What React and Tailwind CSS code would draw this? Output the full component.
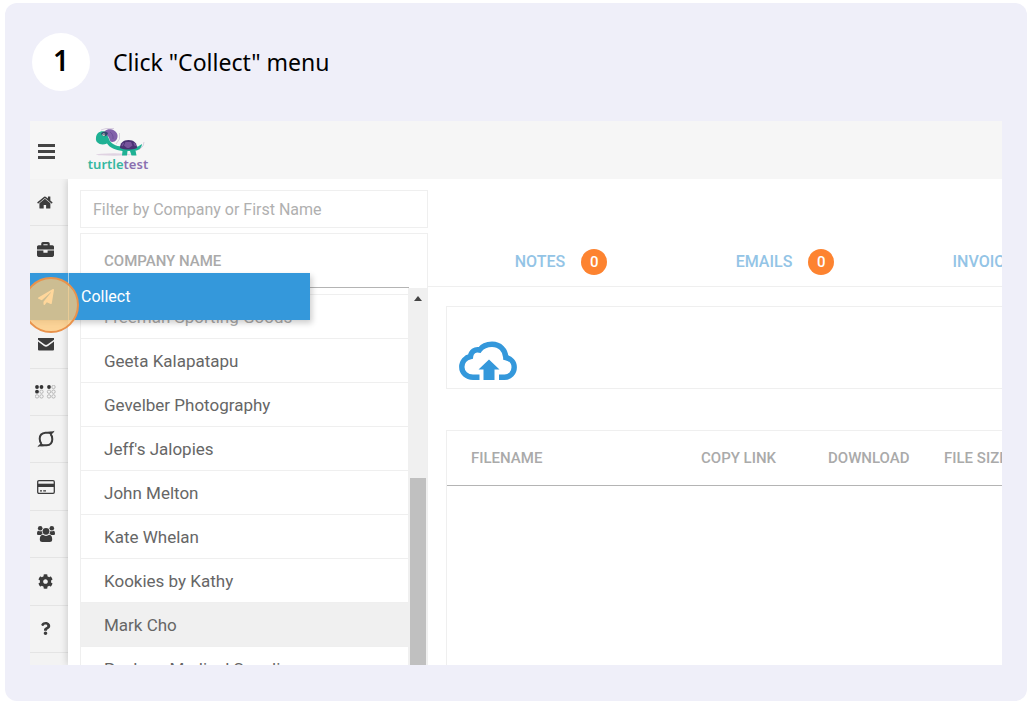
import React from "react";
import { FaBriefcase, FaPaperPlane, FaCog, FaQuestion } from "react-icons/fa";

function HomeIcon() {
  return (
    <svg viewBox="0 0 1792 1792" className="size-[17px]" fill="currentColor" aria-hidden="true">
      <path d="M1408 992v480q0 26-19 45t-45 19h-384v-384h-256v384h-384q-26 0-45-19t-19-45v-480q0-1 .5-3t.5-3l575-474 575 474q1 2 1 6zm223-69l-62 74q-8 9-21 11h-3q-13 0-21-7l-692-577-692 577q-12 8-24 7-13-2-21-11l-62-74q-8-10-7-23.5t11-21.5l719-599q32-26 76-26t76 26l244 204v-195q0-14 9-23t23-9h192q14 0 23 9t9 23v408l219 182q10 8 11 21.5t-7 23.5z" />
    </svg>
  );
}

function MailIcon() {
  return (
    <svg viewBox="0 0 18 14" className="h-[14px] w-[18px]" fill="currentColor" aria-hidden="true">
      <path d="M1 1H17V2.800L10.300 7.600C9.500 8.200 8.500 8.200 7.700 7.600L1 2.800Z" />
      <path d="M1 4.600L7 9C8.200 9.900 9.800 9.900 11 9L17 4.600V12.500Q17 13.500 16 13.500H2Q1 13.500 1 12.500Z" />
    </svg>
  );
}

function DotsIcon() {
  const cells = [];
  [2, 6.5, 14, 18.5].forEach((x, c) =>
    [2, 6.7, 11.4].forEach((y, r) => cells.push({ x, y, on: (r === 0 && c < 3) || (r === 1 && c === 0) }))
  );
  return (
    <svg viewBox="0 0 21 14" className="h-[14px] w-[21px]" aria-hidden="true">
      {cells.map(({ x, y, on }) => (
        <circle key={x + "-" + y} cx={x} cy={y} r={on ? 1.9 : 1.7} fill={on ? "#333" : "#f3f3f3"} stroke={on ? "none" : "#aaa"} strokeWidth="0.8" />
      ))}
    </svg>
  );
}

function LoopIcon() {
  return (
    <svg viewBox="0 0 18 18" className="size-[18px]" fill="none" stroke="currentColor" strokeWidth="2" aria-hidden="true">
      <path d="M14.500 2.700C12 2.700 11 2.700 8.500 2.700C4.500 3 2.700 5.500 2.700 8.800C2.700 11.500 3.500 13 4.500 14" />
      <path d="M3.500 15.300C6 15.300 7 15.300 9.500 15.300C13.500 15 15.300 12.500 15.300 9.200C15.300 6.500 14.500 5 13.500 4" />
      <path d="M17.500 0.800C16 1.800 13 1.600 10.500 1.900L13.500 4.800C15.500 4 17 2.500 17.500 0.800ZM0.500 17.200C2 16.200 5 16.400 7.500 16.100L4.500 13.200C2.500 14 1 15.500 0.500 17.200Z" fill="currentColor" stroke="none" />
    </svg>
  );
}

function CardIcon() {
  return (
    <svg viewBox="0 0 20 16" className="h-4 w-5" aria-hidden="true">
      <rect x="1.700" y="1.700" width="16.600" height="12.600" rx="1.200" fill="none" stroke="currentColor" strokeWidth="1.300" />
      <path d="M1.700 4.700H18.300V8H1.700Z" fill="currentColor" />
      <path d="M4 11.800H6M7.200 11.800H10" stroke="currentColor" strokeWidth="1.200" />
    </svg>
  );
}

function UsersIcon() {
  return (
    <svg viewBox="0 0 20 18" className="h-[18px] w-5" fill="currentColor" aria-hidden="true">
      <circle cx="4.200" cy="3.200" r="2.300" />
      <circle cx="15.800" cy="3.200" r="2.300" />
      <circle cx="10" cy="6.300" r="3.400" />
      <path d="M2.500 5.700C1.300 5.700 1 7.300 1 8.700C1 9.600 1.600 10 2.500 10H4.800C5.500 9.300 6.200 9 6.600 8.800C6 8 5.700 7.200 5.800 6.100C4.500 6.500 3.500 6.300 2.500 5.700Z" />
      <path d="M17.500 5.700C18.700 5.700 19 7.300 19 8.700C19 9.600 18.400 10 17.500 10H15.200C14.500 9.300 13.800 9 13.400 8.800C14 8 14.300 7.200 14.200 6.100C15.500 6.500 16.500 6.300 17.500 5.700Z" />
      <path d="M6.700 9.800C8.800 11.300 11.200 11.300 13.300 9.800C15.500 9.800 16.200 12 16.200 14.500C16.200 16.200 15.200 17 13.800 17H6.200C4.800 17 3.800 16.200 3.800 14.500C3.800 12 4.500 9.800 6.700 9.800Z" />
    </svg>
  );
}

function CloudUploadIcon() {
  return (
    <svg viewBox="0 0 58 40" className="h-10 w-[58px]" aria-hidden="true">
      <path
        d="M20.500 36.200H14C7.500 36.200 2.800 31.700 2.800 26C2.800 20.500 6.700 16.500 11.500 15.500C12 10.500 16 8 20.500 9C23.500 5 28 3.300 33 3.300C41 3.300 46.500 9 46.800 16.500C51.500 17.500 55.200 21 55.200 26.200C55.200 32 51 36.200 45.500 36.200H40"
        fill="none"
        stroke="#3498db"
        strokeWidth="5.400"
      />
      <path d="M30 18.500L40.500 28.500H35.500V39H24.500V28.500H19.500Z" fill="#3498db" />
    </svg>
  );
}

function Logo() {
  return (
    <a href="#home" aria-label="turtletest" className="flex w-16 flex-col items-center pb-[2px]">
      <svg viewBox="0 0 60 30" className="h-[30px] w-[60px]" aria-hidden="true">
        <ellipse cx="26" cy="26.500" rx="18" ry="1.200" fill="#e0d3e2" />
        <path d="M8 10C8 5 13 2 18 4L21 11C22 15 28 18.500 34 18.500H50L54 16C53.500 20 51 22.500 47.500 22.500L48.500 27.500H43.500L42 23H39.500L39 27.500H34L34.500 23C27 22 22 20 19 15.500C13 18 7 15 8 10Z" fill="#1fb194" />
        <path d="M17 3C20 0 28 1 29.500 7C30 11 27.500 14 24.500 14C20.500 14 22.500 9 19 7.500Z" fill="#8261ab" />
        <path d="M22 4C24 5 25.500 8 25 11" fill="none" stroke="#6a4a95" strokeWidth="0.800" />
        <path d="M13 6C14 3 18 2.500 20 5C19 8.500 16 9.500 13 6Z" fill="#31486d" />
        <circle cx="15.800" cy="6.800" r="1.300" fill="#fff" />
        <circle cx="16" cy="6.800" r="0.700" fill="#222" />
        <path d="M32 20C32 15 35 12 40.500 12C46 12 49 15 49 20C44 22 37 22 32 20Z" fill="#4b3274" />
        <path d="M37.500 14H43L44.500 17.500L41 20H39L36 17.500Z" fill="#77539b" />
        <path d="M34 18L35.500 15M46 15L47.500 18" stroke="#77539b" strokeWidth="1.500" />
        <path d="M13 2L18 0.500H26M31.500 5V11L28 16M51 22L55 18L56 14" fill="none" stroke="#cbbfd5" strokeWidth="0.700" />
      </svg>
      <span className="font-['Noto_Sans'] text-[13px] font-semibold leading-3 text-[#35b8a0]">
        turtle<span className="text-[#8b70b0]">test</span>
      </span>
    </a>
  );
}

const navItems = [
  { label: "Home", icon: <HomeIcon /> },
  { label: "Clients", icon: <FaBriefcase className="size-[17px]" /> },
  { label: "Collect", icon: <FaPaperPlane className="size-4" /> },
  { label: "Mail", icon: <MailIcon /> },
  { label: "Boards", icon: <DotsIcon /> },
  { label: "Sync", icon: <LoopIcon /> },
  { label: "Payments", icon: <CardIcon /> },
  { label: "Team", icon: <UsersIcon /> },
  { label: "Settings", icon: <FaCog className="size-[15px]" /> },
  { label: "Help", icon: <FaQuestion className="size-[13px]" /> },
];

const companies = [
  "Freeman Sporting Goods",
  "Geeta Kalapatapu",
  "Gevelber Photography",
  "Jeff's Jalopies",
  "John Melton",
  "Kate Whelan",
  "Kookies by Kathy",
  "Mark Cho",
  "Paulson Medical Supplies",
];

function Sidebar() {
  return (
    <nav className="w-[38px] shrink-0 bg-[#f3f3f3] text-[#3c3c3c]" aria-label="Main">
      <ul className="grid h-[474px] grid-rows-10">
        {navItems.map((item) => (
          <li key={item.label} className="border-b border-[#e4e4e4]">
            <a href={"#" + item.label.toLowerCase()} aria-label={item.label} className="flex h-full items-center justify-center pr-[7px]">
              {item.icon}
            </a>
          </li>
        ))}
      </ul>
    </nav>
  );
}

function CompanyPanel() {
  return (
    <section className="flex w-[348px] shrink-0 flex-col pt-[11px]">
      <input
        type="text"
        aria-label="Filter by Company or First Name"
        placeholder="Filter by Company or First Name"
        className="h-[38px] shrink-0 border border-[#efefef] bg-white px-3 text-base outline-none placeholder:text-[#b0b0b0]"
      />
      <div className="mt-[5px] flex min-h-0 flex-1 flex-col border border-b-0 border-[#efefef]">
        <div className="mr-[18px] h-[54px] shrink-0 border-b border-[#b4b4b4] pl-[23px] text-[15px] font-medium leading-[54px] text-[#aaa]">COMPANY NAME</div>
        <div className="flex min-h-0 flex-1">
          <ul className="mt-[6px] min-w-0 flex-1 border-t border-[#efefef] text-[17px] text-[#666]">
            {companies.map((name) => (
              <li key={name} className={name === "Mark Cho" ? "h-11 border-b border-[#efefef] bg-[#f0f0f0] pl-[23px] leading-11" : "h-11 border-b border-[#efefef] pl-[23px] leading-11 first:text-[#aaa]"}>
                {name}
              </li>
            ))}
          </ul>
          <div className="flex w-[19px] flex-col items-center bg-[#f0f0f0] pt-2">
            <svg viewBox="0 0 8 5" className="h-[5px] w-2 shrink-0" aria-hidden="true">
              <path d="M4 0L8 5H0Z" fill="#444" />
            </svg>
            <div className="mt-[177px] w-4 flex-1 bg-[#c0c0c0]" />
          </div>
        </div>
      </div>
    </section>
  );
}

function Tab({ label, count }) {
  return (
    <a href={"#" + label.toLowerCase()} className="flex h-full w-56 shrink-0 items-center justify-center gap-4 pt-[2px] text-base font-medium text-[#93c4e6]">
      {label}
      <span className="flex size-[26px] items-center justify-center rounded-full bg-[#fd8330] text-[15px] text-white">{count}</span>
    </a>
  );
}

function Files() {
  return (
    <section className="flex min-w-0 flex-1 flex-col overflow-hidden pt-[57px]">
      <nav className="flex h-[51px] shrink-0 border-b border-[#efefef] pl-[21px]" aria-label="Client">
        <Tab label="NOTES" count={0} />
        <Tab label="EMAILS" count={0} />
        <Tab label="INVOICES" count={0} />
      </nav>
      <div className="ml-[18px] mt-[19px] flex h-[83px] shrink-0 items-end border border-r-0 border-[#efefef] px-3 pb-[7px]">
        <button type="button" aria-label="Upload file">
          <CloudUploadIcon />
        </button>
      </div>
      <div className="ml-[18px] mt-[41px] flex-1 overflow-hidden border-l border-t border-[#efefef]">
        <table className="w-[640px] table-fixed text-left text-[15px] text-[#aaa]">
          <thead>
            <tr className="h-[54px] border-b border-[#b4b4b4]">
              <th className="w-[230px] pl-6 font-medium">FILENAME</th>
              <th className="w-[127px] pl-6 font-medium">COPY LINK</th>
              <th className="w-[116px] pl-6 font-medium">DOWNLOAD</th>
              <th className="pl-6 font-medium">FILE SIZE</th>
            </tr>
          </thead>
          <tbody />
        </table>
      </div>
    </section>
  );
}

export default function App() {
  return (
    <main className="bg-white pb-[6px] pl-[5px] pr-[9px] pt-[3px] font-['Roboto',sans-serif]">
      <article className="rounded-xl bg-[#efeff9] px-[25px] pb-9 pt-[30px]">
        <header className="flex items-center gap-[23px] pl-[2px] font-['Noto_Sans',sans-serif] text-black">
          <span className="flex size-[58px] items-center justify-center rounded-full bg-white pb-1 text-[28px] font-semibold">1</span>
          <h1 className="text-[23px]">Click "Collect" menu</h1>
        </header>
        <div className="relative mt-[30px] flex h-[544px] flex-col overflow-hidden bg-white">
          <div className="relative z-10 flex h-[58px] shrink-0 items-center gap-[31px] bg-[#f6f6f6] pl-2">
            <button type="button" aria-label="Toggle menu" className="flex w-[17px] flex-col gap-[3px] pt-[2px]">
              <span className="h-[3px] bg-[#444]" />
              <span className="h-[3px] bg-[#444]" />
              <span className="h-[3px] bg-[#444]" />
            </button>
            <Logo />
          </div>
          <div className="flex min-h-0 flex-1">
            <Sidebar />
            <div className="flex min-w-0 flex-1 pl-3 shadow-[0_0_8px_rgba(0,0,0,0.2)]">
              <CompanyPanel />
              <Files />
            </div>
          </div>
          <a href="#collect" className="absolute left-0 top-[152px] flex h-[47px] w-[280px] items-center bg-[#3498db] text-base text-white shadow-[2px_3px_6px_rgba(0,0,0,0.2)]">
            <span className="flex h-full w-[39px] items-center border-r border-[#a5cfe9] pl-2">
              <FaPaperPlane className="size-4" />
            </span>
            <span className="pl-3">Collect</span>
          </a>
          <span className="absolute -left-[7px] top-[156px] size-14 rounded-full border-2 border-[#e9924b] bg-[#ffc979]/75" />
        </div>
      </article>
    </main>
  );
}
